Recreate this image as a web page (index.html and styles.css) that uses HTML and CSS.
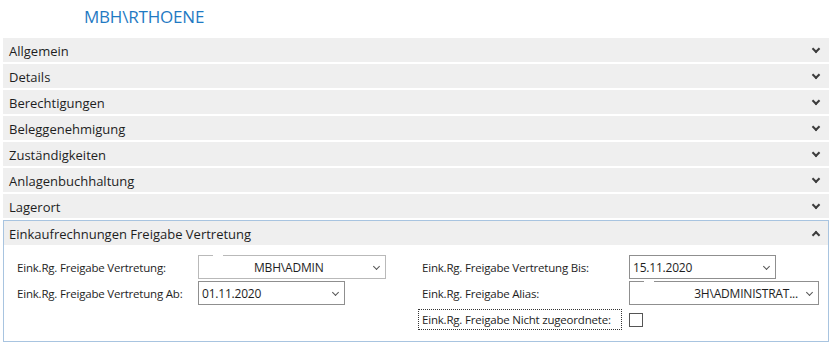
FILE: index.html
```html
<!DOCTYPE html>
<html lang="de">

<head>
  <meta charset="UTF-8" />
  <title>Benutzer</title>
  <link rel="stylesheet" href="styles.css">
</head>

<body>
  <div class="titel">
    <span class="titel-text">MBH\RTHOENE</span>
  </div>

  <div class="gruppen">
    <div class="gruppe"><span class="name">Allgemein</span><span class="pfeil"></span></div>
    <div class="gruppe"><span class="name">Details</span><span class="pfeil"></span></div>
    <div class="gruppe"><span class="name">Berechtigungen</span><span class="pfeil"></span></div>
    <div class="gruppe"><span class="name">Beleggenehmigung</span><span class="pfeil"></span></div>
    <div class="gruppe"><span class="name">Zuständigkeiten</span><span class="pfeil"></span></div>
    <div class="gruppe"><span class="name">Anlagenbuchhaltung</span><span class="pfeil"></span></div>
    <div class="gruppe"><span class="name">Lagerort</span><span class="pfeil"></span></div>

    <div class="offen">
      <div class="gruppe kopf"><span class="name">Einkaufrechnungen Freigabe Vertretung</span><span class="pfeil hoch"></span></div>
      <div class="felder">
        <div class="spalte links">
          <div class="feld">
            <label class="label">Eink.Rg. Freigabe Vertretung:</label>
            <div class="auswahl breit luecke"><span class="wert mitte">MBH\ADMIN</span><span class="pfeil klein"></span></div>
          </div>
          <div class="feld">
            <label class="label">Eink.Rg. Freigabe Vertretung Ab:</label>
            <div class="auswahl schmal"><span class="wert">01.11.2020</span><span class="pfeil klein"></span></div>
          </div>
        </div>
        <div class="spalte rechts">
          <div class="feld">
            <label class="label">Eink.Rg. Freigabe Vertretung Bis:</label>
            <div class="auswahl schmal"><span class="wert">15.11.2020</span><span class="pfeil klein"></span></div>
          </div>
          <div class="feld">
            <label class="label">Eink.Rg. Freigabe Alias:</label>
            <div class="auswahl breiter luecke"><span class="wert ende">3H\ADMINISTRAT...</span><span class="pfeil klein"></span></div>
          </div>
          <div class="feld">
            <label class="label fokus">Eink.Rg. Freigabe Nicht zugeordnete:</label>
            <span class="haken"></span>
          </div>
        </div>
      </div>
    </div>
  </div>
</body>

</html>
```

FILE: styles.css
```css
* {
  box-sizing: border-box;
  margin: 0;
  padding: 0;
}

body {
  width: 833px;
  height: 343px;
  background: #ffffff;
  font-family: "Open Sans", "Noto Sans", sans-serif;
  font-size: 11.5px;
  letter-spacing: -0.2px;
  color: #1e1e1e;
  overflow: hidden;
}

/* Titel */
.titel {
  height: 38px;
  padding: 5px 0 0 84px;
}

.titel-text {
  font-size: 17px;
  color: #1f7ac3;
  letter-spacing: -0.2px;
}

/* Gruppen */
.gruppen {
  display: flex;
  flex-direction: column;
  gap: 2px;
  padding: 0 4px 0 3px;
}

.gruppe {
  display: flex;
  justify-content: space-between;
  align-items: center;
  height: 24px;
  padding: 0 10px 0 6px;
  background: #efefef;
}

.name {
  font-size: 13px;
  letter-spacing: 0;
  padding-top: 2px;
}

.pfeil {
  width: 6px;
  height: 6px;
  border-right: 2px solid #3c3c3c;
  border-bottom: 2px solid #3c3c3c;
  transform: translateY(-1px) rotate(45deg);
}

.pfeil.hoch {
  transform: translateY(2px) rotate(-135deg);
}

.pfeil.klein {
  width: 5px;
  height: 5px;
  border-right: 1.5px solid #555555;
  border-bottom: 1.5px solid #555555;
  margin-right: 6px;
  flex-shrink: 0;
}

/* Offene Gruppe */
.offen {
  border: 1px solid #a8c4e0;
  height: 122px;
}

.kopf {
  margin: 0;
  padding-left: 5px;
  padding-right: 9px;
}

.felder {
  display: flex;
  padding: 10px 0 0 12px;
}

.spalte {
  display: flex;
  flex-direction: column;
  gap: 2px;
}

.links {
  width: 405px;
}

.feld {
  display: flex;
  align-items: center;
  height: 24px;
}

.links .label {
  width: 182px;
}

.rechts .label {
  width: 208px;
}

.label {
  padding-left: 1px;
  padding-top: 1px;
  white-space: nowrap;
}

.fokus {
  outline: 1px dotted #333333;
  margin-left: -2px;
  padding-left: 3px;
  width: 202px !important;
  margin-right: 8px;
  line-height: 18px;
}

.auswahl {
  display: flex;
  align-items: center;
  justify-content: space-between;
  height: 24px;
  border: 1px solid #8f8f8f;
  background: #ffffff;
  position: relative;
}

.auswahl.luecke::before {
  content: "";
  position: absolute;
  top: -1px;
  left: 14px;
  width: 10px;
  height: 1px;
  background: #ffffff;
}

.schmal {
  width: 147px;
}

.breit {
  width: 188px;
  border-color: #b9b9b9;
}

.breiter {
  width: 190px;
}

.wert {
  padding-left: 3px;
  padding-top: 1px;
  font-size: 12px;
  white-space: nowrap;
}

.wert.mitte {
  padding-left: 55px;
}

.wert.ende {
  flex: 1;
  text-align: right;
  padding-right: 9px;
}

.haken {
  width: 14px;
  height: 14px;
  border: 1px solid #555555;
  margin-top: 2px;
}
```
